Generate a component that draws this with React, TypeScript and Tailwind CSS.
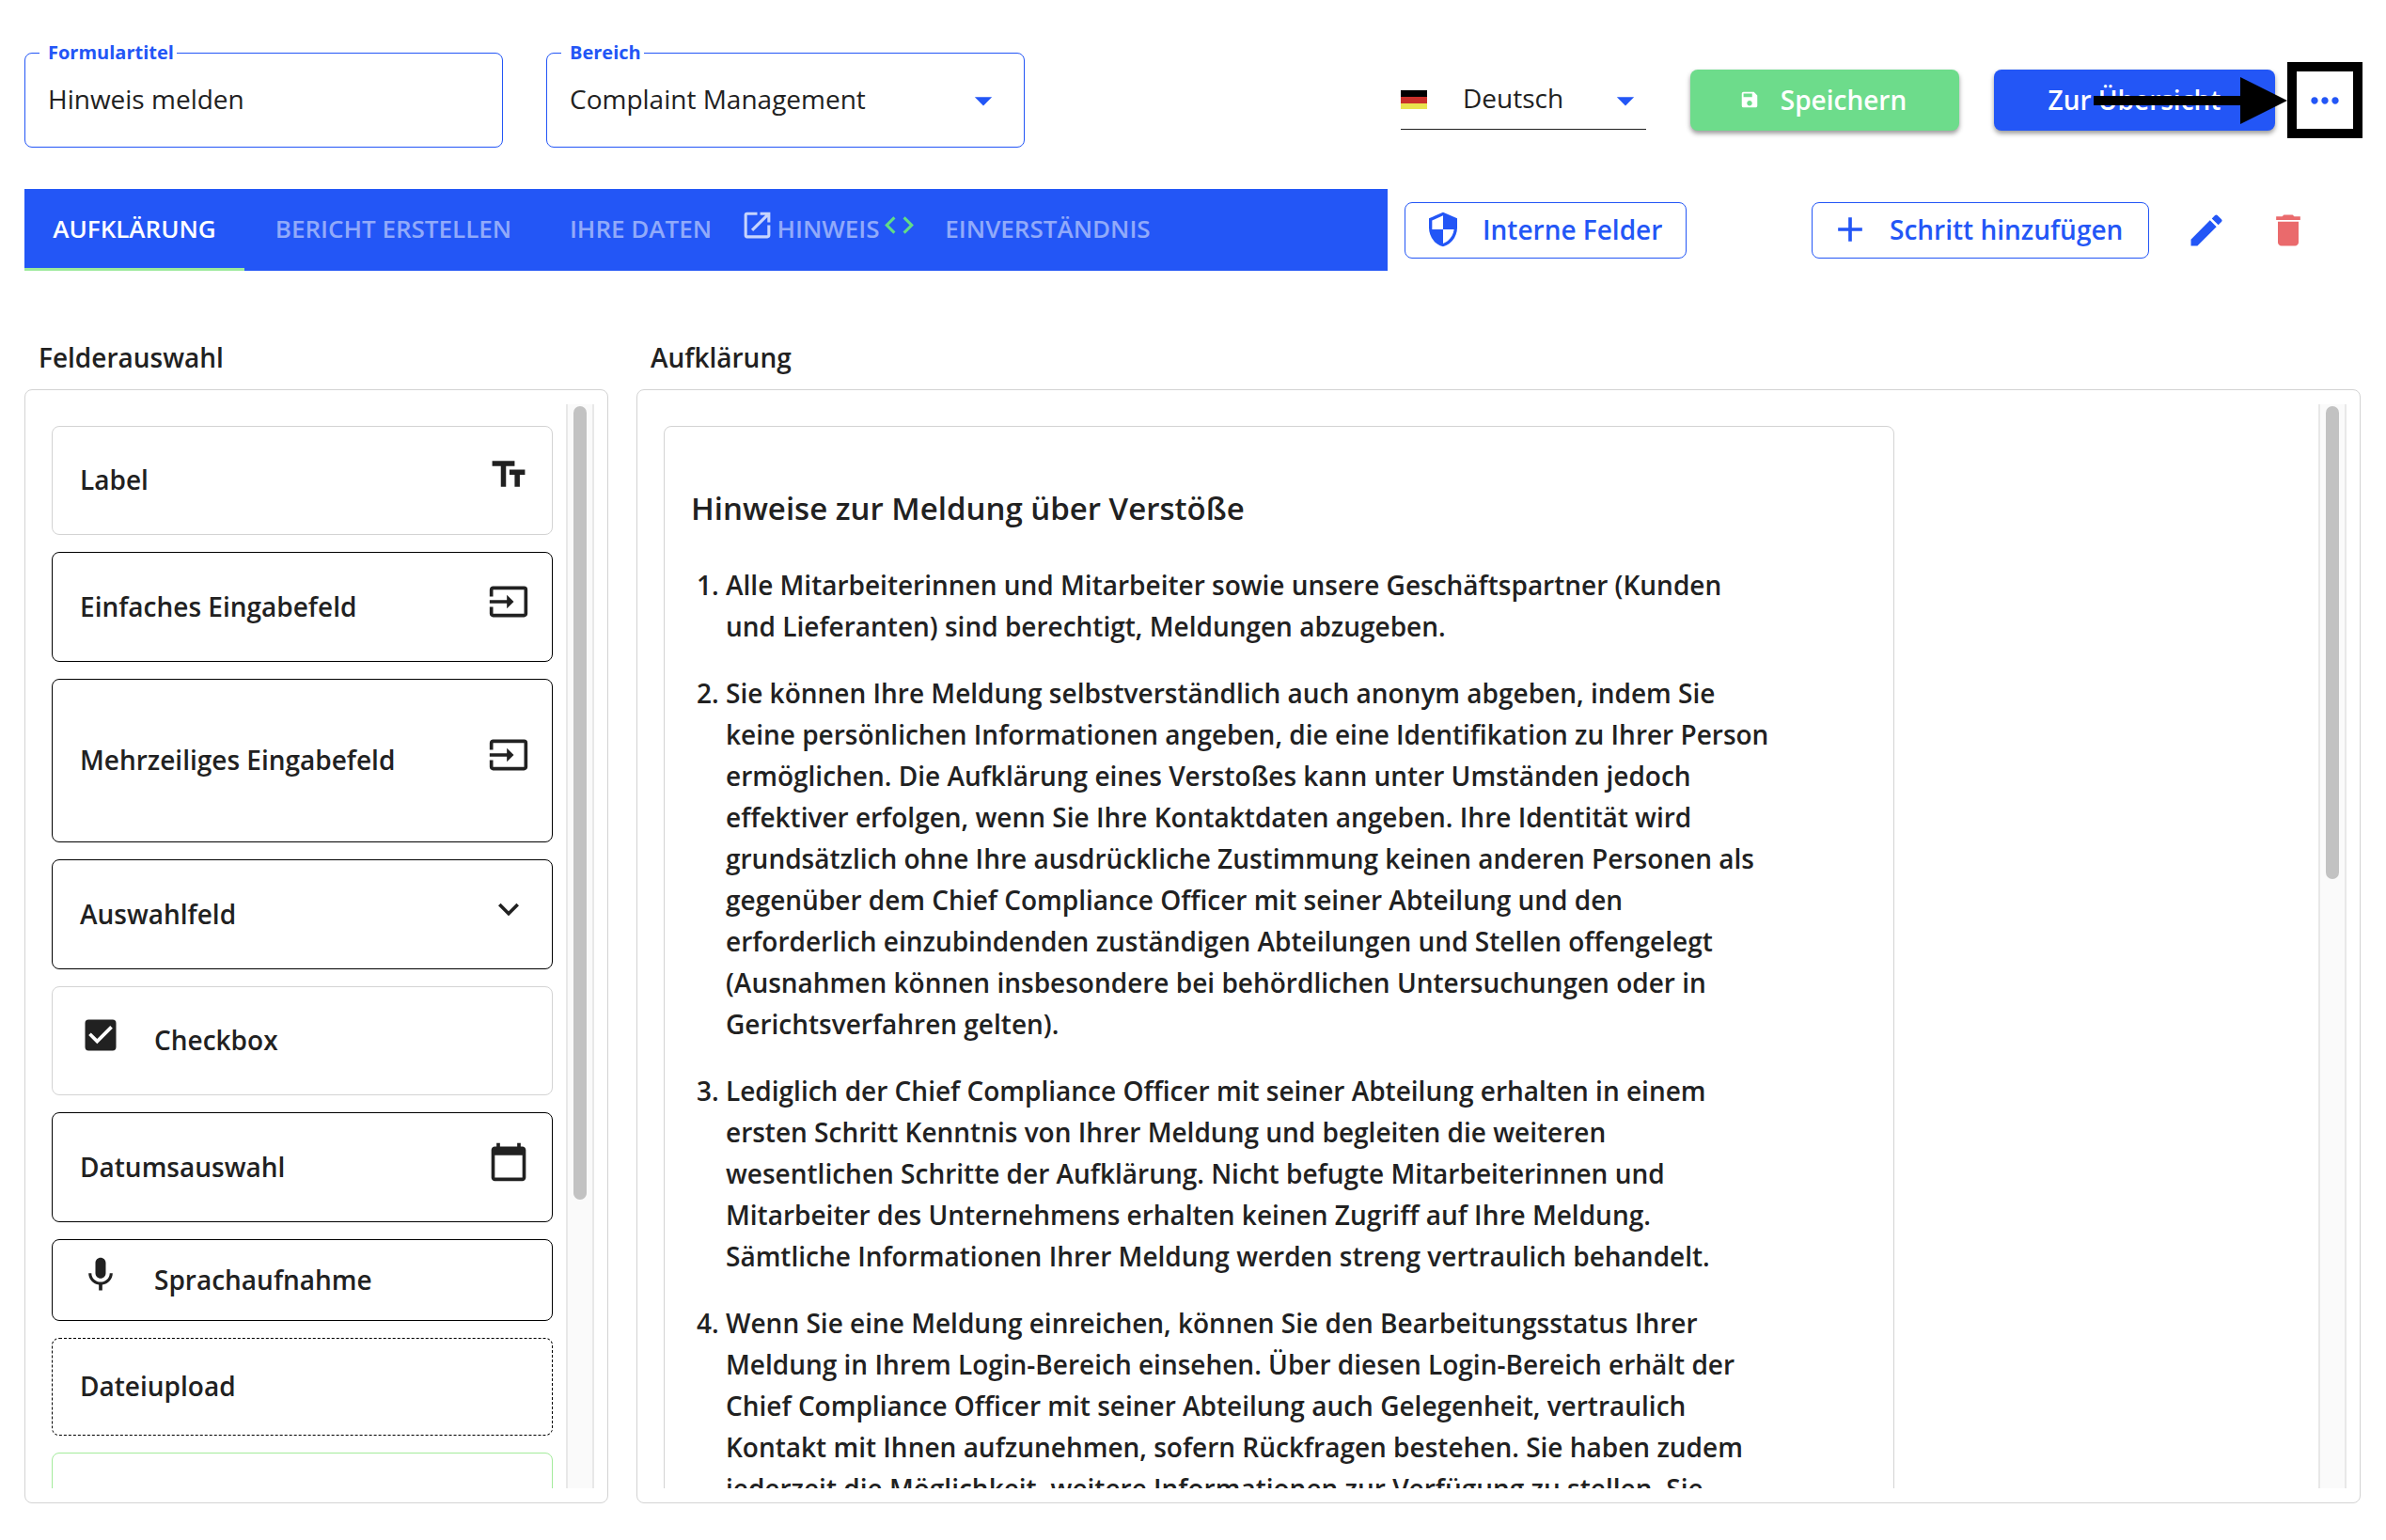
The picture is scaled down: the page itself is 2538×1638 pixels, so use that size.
import type { ReactNode } from "react";
import {
  MdAdd,
  MdArrowDropDown,
  MdCalendarToday,
  MdCheckBox,
  MdCode,
  MdDelete,
  MdEdit,
  MdInput,
  MdKeyboardArrowDown,
  MdMic,
  MdMoreHoriz,
  MdOpenInNew,
  MdSave,
  MdSecurity,
  MdTextFields,
} from "react-icons/md";

type FieldItem = {
  label: string;
  box: string;
  left?: ReactNode;
  right?: ReactNode;
};

const fieldItems: FieldItem[] = [
  { label: "Label", box: "h-[116px] border-[#d3d3d3]", right: <MdTextFields size={44} /> },
  { label: "Einfaches Eingabefeld", box: "h-[117px] border-black", right: <MdInput size={44} /> },
  { label: "Mehrzeiliges Eingabefeld", box: "h-[174px] border-black", right: <MdInput size={44} /> },
  { label: "Auswahlfeld", box: "h-[117px] border-black", right: <MdKeyboardArrowDown size={44} /> },
  { label: "Checkbox", box: "h-[116px] border-[#d3d3d3]", left: <MdCheckBox size={44} /> },
  { label: "Datumsauswahl", box: "h-[117px] border-black", right: <MdCalendarToday size={44} /> },
  { label: "Sprachaufnahme", box: "h-[87px] border-black", left: <MdMic size={44} /> },
  { label: "Dateiupload", box: "h-[104px] border-black border-dashed" },
  { label: "", box: "h-[116px] border-[#a3eb9b]" },
];

const hints = [
  `Alle Mitarbeiterinnen und Mitarbeiter sowie unsere Geschäftspartner (Kunden
und Lieferanten) sind berechtigt, Meldungen abzugeben.`,
  `Sie können Ihre Meldung selbstverständlich auch anonym abgeben, indem Sie
keine persönlichen Informationen angeben, die eine Identifikation zu Ihrer Person
ermöglichen. Die Aufklärung eines Verstoßes kann unter Umständen jedoch
effektiver erfolgen, wenn Sie Ihre Kontaktdaten angeben. Ihre Identität wird
grundsätzlich ohne Ihre ausdrückliche Zustimmung keinen anderen Personen als
gegenüber dem Chief Compliance Officer mit seiner Abteilung und den
erforderlich einzubindenden zuständigen Abteilungen und Stellen offengelegt
(Ausnahmen können insbesondere bei behördlichen Untersuchungen oder in
Gerichtsverfahren gelten).`,
  `Lediglich der Chief Compliance Officer mit seiner Abteilung erhalten in einem
ersten Schritt Kenntnis von Ihrer Meldung und begleiten die weiteren
wesentlichen Schritte der Aufklärung. Nicht befugte Mitarbeiterinnen und
Mitarbeiter des Unternehmens erhalten keinen Zugriff auf Ihre Meldung.
Sämtliche Informationen Ihrer Meldung werden streng vertraulich behandelt.`,
  `Wenn Sie eine Meldung einreichen, können Sie den Bearbeitungsstatus Ihrer
Meldung in Ihrem Login-Bereich einsehen. Über diesen Login-Bereich erhält der
Chief Compliance Officer mit seiner Abteilung auch Gelegenheit, vertraulich
Kontakt mit Ihnen aufzunehmen, sofern Rückfragen bestehen. Sie haben zudem
jederzeit die Möglichkeit, weitere Informationen zur Verfügung zu stellen. Sie`,
];

function Panel({ title, thumb, children }: { title: string; thumb: string; children: ReactNode }) {
  return (
    <section className="flex min-h-0 min-w-0 flex-col">
      <h2 className="mb-[14px] pl-[15px] text-[28px] leading-10 font-semibold">{title}</h2>
      <div className="flex min-h-0 flex-1 rounded-lg border border-[#d3d3d3] py-[15px] pr-[14px] pl-7">
        <div className="min-h-0 min-w-0 flex-1 overflow-y-auto pt-[23px] [scrollbar-width:none]">{children}</div>
        <div className="w-[30px] shrink-0 border-x-2 border-[#e8e8e8] bg-[#fafafa] px-[6px] pt-[2px]">
          <div className={thumb} />
        </div>
      </div>
    </section>
  );
}

function FloatingLabel({ htmlFor, children }: { htmlFor: string; children: ReactNode }) {
  return (
    <label
      htmlFor={htmlFor}
      className="absolute -top-3 left-4 bg-white pr-[3px] pl-[9px] text-xl leading-6 font-bold text-[#2356f6]"
    >
      {children}
    </label>
  );
}

function Header() {
  return (
    <header className="flex items-center pr-[25px] pl-[26px]">
      <div className="relative w-[509px]">
        <FloatingLabel htmlFor="form-title">Formulartitel</FloatingLabel>
        <input
          id="form-title"
          defaultValue="Hinweis melden"
          className="h-[101px] w-full rounded-lg border border-[#2356f6] px-6 pb-[3px] text-[28px] outline-none"
        />
      </div>
      <div className="relative ml-[46px] w-[509px]">
        <FloatingLabel htmlFor="area">Bereich</FloatingLabel>
        <select
          id="area"
          className="h-[101px] w-full appearance-none rounded-lg border border-[#2356f6] bg-white px-6 pb-[3px] text-[28px] outline-none"
        >
          <option>Complaint Management</option>
        </select>
        <MdArrowDropDown size={44} className="pointer-events-none absolute top-[29px] right-[22px] text-[#2356f6]" />
      </div>

      <div className="relative ml-auto w-[261px]">
        <select
          aria-label="Sprache"
          className="h-[62px] w-full appearance-none border-b border-[#212121] bg-white pb-1 pl-[66px] text-[28px] outline-none"
        >
          <option>Deutsch</option>
        </select>
        <svg viewBox="0 0 28 20" className="pointer-events-none absolute top-5 left-0 h-5 w-7">
          <rect width="28" height="7" fill="#000" />
          <rect y="7" width="28" height="7" fill="#c9302a" />
          <rect y="14" width="28" height="6" fill="#e9e34e" />
        </svg>
        <MdArrowDropDown size={44} className="pointer-events-none absolute top-[9px] right-0 text-[#2356f6]" />
      </div>
      <button className="ml-[47px] flex h-[65px] w-[286px] items-center justify-center gap-[22px] rounded-lg bg-[#6ddc8b] pr-1 pb-[2px] text-[28px] font-semibold text-white shadow-[0_3px_5px_rgba(0,0,0,0.4)]">
        <MdSave size={22} />
        Speichern
      </button>
      <button className="ml-[37px] h-[65px] w-[299px] rounded-lg bg-[#2356f6] pb-[2px] text-[28px] font-semibold text-white shadow-[0_3px_5px_rgba(0,0,0,0.4)]">
        Zur Übersicht
      </button>
      <div className="relative ml-[13px]">
        <svg viewBox="0 0 206 50" className="pointer-events-none absolute top-4 right-full h-[50px] w-[206px] max-w-none">
          <path d="M0 20H156V0L206 25L156 50V30H0Z" fill="#000" />
        </svg>
        <button
          aria-label="Mehr"
          className="flex h-[81px] w-20 items-center justify-center border-10 border-black bg-white text-[#2356f6]"
        >
          <MdMoreHoriz size={44} className="shrink-0" />
        </button>
      </div>
    </header>
  );
}

function StepBar() {
  const tab = "flex h-full items-center justify-center pb-[2px] text-[26px] font-semibold text-white/50";
  return (
    <div className="mt-11 flex items-center pr-[82px] pl-[26px]">
      <nav className="flex h-[87px] w-[1450px] items-center bg-[#2356f6]">
        <button className="flex h-full w-[234px] items-center justify-center border-b-3 border-[#9ce99a] pt-[1px] text-[26px] font-semibold text-white">
          AUFKLÄRUNG
        </button>
        <button className={`${tab} w-[317px]`}>BERICHT ERSTELLEN</button>
        <button className={`${tab} w-[209px]`}>IHRE DATEN</button>
        <button className={`${tab} w-[190px] gap-[2px]`}>
          <MdOpenInNew size={37} className="mb-2 shrink-0 text-white/75" />
          HINWEIS
          <MdCode size={37} className="mb-2 shrink-0 text-[#62dc86]" />
        </button>
        <button className={`${tab} w-[277px]`}>EINVERSTÄNDNIS</button>
      </nav>
      <button className="ml-[18px] flex h-15 w-[300px] items-center gap-[22px] rounded-lg border border-[#2356f6] pb-[1px] pl-5 text-[28px] font-semibold text-[#2356f6]">
        <MdSecurity size={40} />
        Interne Felder
      </button>
      <button className="ml-auto flex h-15 w-[359px] items-center gap-5 rounded-lg border border-[#2356f6] pb-[1px] pl-[18px] text-[28px] font-semibold text-[#2356f6]">
        <MdAdd size={44} />
        Schritt hinzufügen
      </button>
      <button aria-label="Bearbeiten" className="ml-[39px] text-[#2356f6]">
        <MdEdit size={44} />
      </button>
      <button aria-label="Löschen" className="ml-[43px] text-[#ea6a6c]">
        <MdDelete size={44} />
      </button>
    </div>
  );
}

export default function App() {
  return (
    <div className="flex h-screen flex-col bg-white pt-14 pb-[39px] font-['Open_Sans',sans-serif] text-[#212121]">
      <Header />
      <StepBar />
      <main className="mt-[72px] grid min-h-0 flex-1 grid-cols-[621fr_1834fr] grid-rows-[minmax(0,1fr)] gap-[30px] pr-[27px] pl-[26px]">
        <Panel title="Felderauswahl" thumb="h-[844px] rounded-full bg-[#c2c2c2]">
          <ul className="mr-[14px] flex flex-col gap-[18px]">
            {fieldItems.map((item) => (
              <li key={item.label}>
                <button
                  className={`flex w-full items-center rounded-lg border pr-6 pb-[2px] pl-[29px] text-left text-[28px] font-semibold ${item.box}`}
                >
                  {item.left && <span className="mr-[35px] mb-[10px]">{item.left}</span>}
                  {item.label}
                  {item.right && <span className="mb-[10px] ml-auto">{item.right}</span>}
                </button>
              </li>
            ))}
          </ul>
        </Panel>
        <Panel title="Aufklärung" thumb="h-[503px] rounded-full bg-[#c2c2c2]">
          <article className="w-[1309px] max-w-full rounded-lg border border-[#d3d3d3] px-7 pt-[63px] pb-10">
            <h3 className="text-[33px] leading-12 font-semibold">Hinweise zur Meldung über Verstöße</h3>
            <ol className="mt-[35px] flex list-decimal flex-col gap-[27px] pl-[37px] text-[28px] leading-[44px] font-semibold">
              {hints.map((hint) => (
                <li key={hint} className="whitespace-pre-line">
                  {hint}
                </li>
              ))}
            </ol>
          </article>
        </Panel>
      </main>
    </div>
  );
}
